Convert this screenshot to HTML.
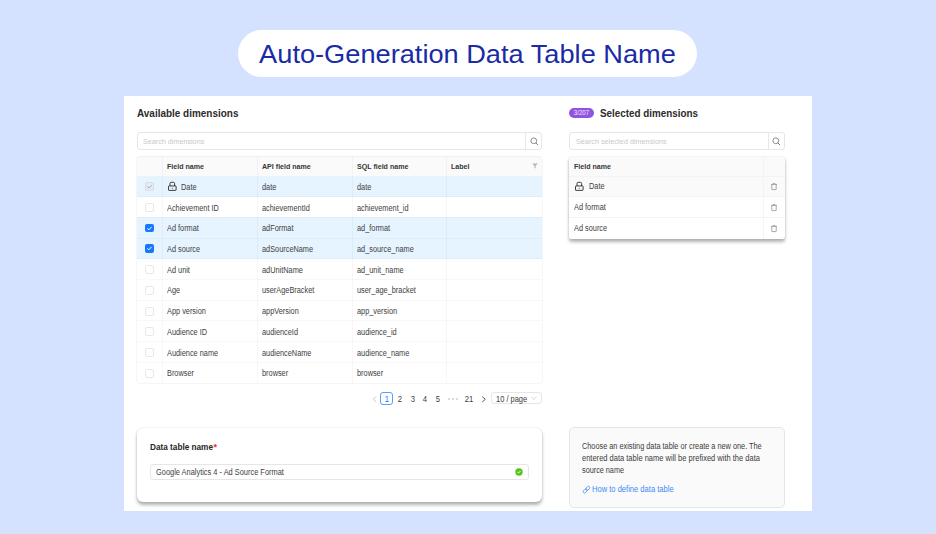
<!DOCTYPE html><html><head><meta charset="utf-8"><style>
*{box-sizing:border-box;margin:0;padding:0}
html,body{width:936px;height:534px;overflow:hidden;background:#D4E2FF;font-family:"Liberation Sans", sans-serif;}
.abs{position:absolute}
.t{position:absolute;white-space:nowrap;transform-origin:0 0}
</style></head><body>
<div class="abs" style="left:238px;top:30px;width:459px;height:47px;border-radius:23.5px;background:#fff"></div>
<div class="t" style="left:237.80px;top:41.10px;width:459px;text-align:center;font-size:26px;line-height:26px;font-weight:normal;color:#1A2BA6;transform:scaleX(1.046);transform-origin:50% 0;">Auto-Generation Data Table Name</div>
<div class="abs" style="left:124px;top:96px;width:688px;height:415px;background:#fff"></div>
<div class="t" style="left:136.70px;top:108.15px;font-size:11px;line-height:11px;font-weight:bold;color:#2b2b2b;transform:scaleX(0.905);">Available dimensions</div>
<div class="abs" style="left:137px;top:132px;width:405px;height:17.8px;border:1px solid #e6e6e6;border-radius:3px"></div>
<div class="abs" style="left:525px;top:132px;width:1px;height:17.8px;background:#e6e6e6"></div>
<svg class="abs" width="9" height="9" viewBox="0 0 9 9" style="left:529.50px;top:136.50px"><circle cx="3.8" cy="3.8" r="2.9" fill="none" stroke="#7a7a7a" stroke-width="0.85"/><path d="M5.9 5.9L8.1 8.1" stroke="#7a7a7a" stroke-width="0.95"/></svg>
<div class="t" style="left:143.00px;top:137.80px;font-size:8px;line-height:8px;font-weight:normal;color:#c9c9c9;transform:scaleX(0.9);">Search dimensions</div>
<div class="abs" style="left:137px;top:156.2px;width:405px;height:19.8px;background:#fafafa;border-radius:3.5px 3.5px 0 0"></div>
<div class="abs" style="left:137px;top:176.00px;width:405px;height:20.7px;background:#E6F4FF"></div>
<div class="abs" style="left:137px;top:196.70px;width:405px;height:20.7px;background:#fff"></div>
<div class="abs" style="left:137px;top:217.40px;width:405px;height:20.7px;background:#E6F4FF"></div>
<div class="abs" style="left:137px;top:238.10px;width:405px;height:20.7px;background:#E6F4FF"></div>
<div class="abs" style="left:137px;top:258.80px;width:405px;height:20.7px;background:#fff"></div>
<div class="abs" style="left:137px;top:279.50px;width:405px;height:20.7px;background:#fff"></div>
<div class="abs" style="left:137px;top:300.20px;width:405px;height:20.7px;background:#fff"></div>
<div class="abs" style="left:137px;top:320.90px;width:405px;height:20.7px;background:#fff"></div>
<div class="abs" style="left:137px;top:341.60px;width:405px;height:20.7px;background:#fff"></div>
<div class="abs" style="left:137px;top:362.30px;width:405px;height:20.7px;background:#fff"></div>
<div class="abs" style="left:137px;top:196.20px;width:405px;height:1px;background:rgba(0,0,0,0.028)"></div>
<div class="abs" style="left:137px;top:216.90px;width:405px;height:1px;background:rgba(0,0,0,0.028)"></div>
<div class="abs" style="left:137px;top:237.60px;width:405px;height:1px;background:rgba(0,0,0,0.028)"></div>
<div class="abs" style="left:137px;top:258.30px;width:405px;height:1px;background:rgba(0,0,0,0.028)"></div>
<div class="abs" style="left:137px;top:279.00px;width:405px;height:1px;background:rgba(0,0,0,0.028)"></div>
<div class="abs" style="left:137px;top:299.70px;width:405px;height:1px;background:rgba(0,0,0,0.028)"></div>
<div class="abs" style="left:137px;top:320.40px;width:405px;height:1px;background:rgba(0,0,0,0.028)"></div>
<div class="abs" style="left:137px;top:341.10px;width:405px;height:1px;background:rgba(0,0,0,0.028)"></div>
<div class="abs" style="left:137px;top:361.80px;width:405px;height:1px;background:rgba(0,0,0,0.028)"></div>
<div class="abs" style="left:162px;top:156.2px;width:1px;height:226.80px;background:rgba(0,0,0,0.032)"></div>
<div class="abs" style="left:257px;top:156.2px;width:1px;height:226.80px;background:rgba(0,0,0,0.032)"></div>
<div class="abs" style="left:352px;top:156.2px;width:1px;height:226.80px;background:rgba(0,0,0,0.032)"></div>
<div class="abs" style="left:446px;top:156.2px;width:1px;height:226.80px;background:rgba(0,0,0,0.032)"></div>
<div class="abs" style="left:136.3px;top:155.70px;width:406.4px;height:228.60px;border:1px solid rgba(0,0,0,0.035);border-radius:3.5px"></div>
<div class="t" style="left:166.90px;top:163.00px;font-size:8px;line-height:8px;font-weight:bold;color:#363636;transform:scaleX(0.885);">Field name</div>
<div class="t" style="left:261.90px;top:163.00px;font-size:8px;line-height:8px;font-weight:bold;color:#363636;transform:scaleX(0.885);">API field name</div>
<div class="t" style="left:356.90px;top:163.00px;font-size:8px;line-height:8px;font-weight:bold;color:#363636;transform:scaleX(0.885);">SQL field name</div>
<div class="t" style="left:451.10px;top:163.00px;font-size:8px;line-height:8px;font-weight:bold;color:#363636;transform:scaleX(0.885);">Label</div>
<svg class="abs" width="6" height="6" viewBox="0 0 6 6" style="left:532px;top:163px"><path d="M0.2 0.6H5.8L3.6 3.0V5.6L2.4 5.0V3.0Z" fill="#b8b8b8"/></svg>
<div class="abs" style="left:145.2px;top:182.25px;width:8.6px;height:8.6px;border-radius:2px;background:#e4ebf2;border:0.7px solid #d6dee7"></div>
<svg class="abs" width="9" height="9" viewBox="0 0 9 9" style="left:145px;top:182.25px"><path d="M2.3 4.4L3.9 6.0L6.8 3.3" fill="none" stroke="#a4acb6" stroke-width="1.0"/></svg>
<svg class="abs" width="11" height="11" viewBox="0 0 11 11" style="left:166.90px;top:181.15px"><path d="M3.0 5.0V2.5a1.2 1.2 0 0 1 1.2 -1.2h2.2a1.2 1.2 0 0 1 1.2 1.2V5.0" fill="none" stroke="#333" stroke-width="0.95"/><rect x="1.5" y="4.95" width="7.6" height="4.4" rx="0.45" fill="none" stroke="#333" stroke-width="0.95"/><rect x="4.75" y="6.75" width="1.1" height="0.8" fill="#444"/></svg>
<div class="t" style="left:181.40px;top:182.93px;font-size:8.5px;line-height:8.5px;font-weight:normal;color:#404040;transform:scaleX(0.865);">Date</div>
<div class="t" style="left:261.90px;top:182.93px;font-size:8.5px;line-height:8.5px;font-weight:normal;color:#404040;transform:scaleX(0.865);">date</div>
<div class="t" style="left:356.90px;top:182.93px;font-size:8.5px;line-height:8.5px;font-weight:normal;color:#404040;transform:scaleX(0.865);">date</div>
<div class="abs" style="left:145.2px;top:203.05px;width:8.8px;height:9px;border-radius:2px;background:#fff;border:0.8px solid #e8e8e8"></div>
<div class="t" style="left:166.90px;top:203.62px;font-size:8.5px;line-height:8.5px;font-weight:normal;color:#404040;transform:scaleX(0.865);">Achievement ID</div>
<div class="t" style="left:261.90px;top:203.62px;font-size:8.5px;line-height:8.5px;font-weight:normal;color:#404040;transform:scaleX(0.865);">achievementId</div>
<div class="t" style="left:356.90px;top:203.62px;font-size:8.5px;line-height:8.5px;font-weight:normal;color:#404040;transform:scaleX(0.865);">achievement_id</div>
<div class="abs" style="left:145.2px;top:223.75px;width:8.9px;height:8.6px;border-radius:2px;background:#1677FF"></div>
<svg class="abs" width="9" height="9" viewBox="0 0 9 9" style="left:145.2px;top:223.75px"><path d="M2.3 4.4L3.9 5.8L6.6 2.9" fill="none" stroke="#fff" stroke-width="1.0"/></svg>
<div class="t" style="left:166.90px;top:224.33px;font-size:8.5px;line-height:8.5px;font-weight:normal;color:#404040;transform:scaleX(0.865);">Ad format</div>
<div class="t" style="left:261.90px;top:224.33px;font-size:8.5px;line-height:8.5px;font-weight:normal;color:#404040;transform:scaleX(0.865);">adFormat</div>
<div class="t" style="left:356.90px;top:224.33px;font-size:8.5px;line-height:8.5px;font-weight:normal;color:#404040;transform:scaleX(0.865);">ad_format</div>
<div class="abs" style="left:145.2px;top:244.45px;width:8.9px;height:8.6px;border-radius:2px;background:#1677FF"></div>
<svg class="abs" width="9" height="9" viewBox="0 0 9 9" style="left:145.2px;top:244.45px"><path d="M2.3 4.4L3.9 5.8L6.6 2.9" fill="none" stroke="#fff" stroke-width="1.0"/></svg>
<div class="t" style="left:166.90px;top:245.03px;font-size:8.5px;line-height:8.5px;font-weight:normal;color:#404040;transform:scaleX(0.865);">Ad source</div>
<div class="t" style="left:261.90px;top:245.03px;font-size:8.5px;line-height:8.5px;font-weight:normal;color:#404040;transform:scaleX(0.865);">adSourceName</div>
<div class="t" style="left:356.90px;top:245.03px;font-size:8.5px;line-height:8.5px;font-weight:normal;color:#404040;transform:scaleX(0.865);">ad_source_name</div>
<div class="abs" style="left:145.2px;top:265.15px;width:8.8px;height:9px;border-radius:2px;background:#fff;border:0.8px solid #e8e8e8"></div>
<div class="t" style="left:166.90px;top:265.73px;font-size:8.5px;line-height:8.5px;font-weight:normal;color:#404040;transform:scaleX(0.865);">Ad unit</div>
<div class="t" style="left:261.90px;top:265.73px;font-size:8.5px;line-height:8.5px;font-weight:normal;color:#404040;transform:scaleX(0.865);">adUnitName</div>
<div class="t" style="left:356.90px;top:265.73px;font-size:8.5px;line-height:8.5px;font-weight:normal;color:#404040;transform:scaleX(0.865);">ad_unit_name</div>
<div class="abs" style="left:145.2px;top:285.85px;width:8.8px;height:9px;border-radius:2px;background:#fff;border:0.8px solid #e8e8e8"></div>
<div class="t" style="left:166.90px;top:286.43px;font-size:8.5px;line-height:8.5px;font-weight:normal;color:#404040;transform:scaleX(0.865);">Age</div>
<div class="t" style="left:261.90px;top:286.43px;font-size:8.5px;line-height:8.5px;font-weight:normal;color:#404040;transform:scaleX(0.865);">userAgeBracket</div>
<div class="t" style="left:356.90px;top:286.43px;font-size:8.5px;line-height:8.5px;font-weight:normal;color:#404040;transform:scaleX(0.865);">user_age_bracket</div>
<div class="abs" style="left:145.2px;top:306.55px;width:8.8px;height:9px;border-radius:2px;background:#fff;border:0.8px solid #e8e8e8"></div>
<div class="t" style="left:166.90px;top:307.12px;font-size:8.5px;line-height:8.5px;font-weight:normal;color:#404040;transform:scaleX(0.865);">App version</div>
<div class="t" style="left:261.90px;top:307.12px;font-size:8.5px;line-height:8.5px;font-weight:normal;color:#404040;transform:scaleX(0.865);">appVersion</div>
<div class="t" style="left:356.90px;top:307.12px;font-size:8.5px;line-height:8.5px;font-weight:normal;color:#404040;transform:scaleX(0.865);">app_version</div>
<div class="abs" style="left:145.2px;top:327.25px;width:8.8px;height:9px;border-radius:2px;background:#fff;border:0.8px solid #e8e8e8"></div>
<div class="t" style="left:166.90px;top:327.82px;font-size:8.5px;line-height:8.5px;font-weight:normal;color:#404040;transform:scaleX(0.865);">Audience ID</div>
<div class="t" style="left:261.90px;top:327.82px;font-size:8.5px;line-height:8.5px;font-weight:normal;color:#404040;transform:scaleX(0.865);">audienceId</div>
<div class="t" style="left:356.90px;top:327.82px;font-size:8.5px;line-height:8.5px;font-weight:normal;color:#404040;transform:scaleX(0.865);">audience_id</div>
<div class="abs" style="left:145.2px;top:347.95px;width:8.8px;height:9px;border-radius:2px;background:#fff;border:0.8px solid #e8e8e8"></div>
<div class="t" style="left:166.90px;top:348.53px;font-size:8.5px;line-height:8.5px;font-weight:normal;color:#404040;transform:scaleX(0.865);">Audience name</div>
<div class="t" style="left:261.90px;top:348.53px;font-size:8.5px;line-height:8.5px;font-weight:normal;color:#404040;transform:scaleX(0.865);">audienceName</div>
<div class="t" style="left:356.90px;top:348.53px;font-size:8.5px;line-height:8.5px;font-weight:normal;color:#404040;transform:scaleX(0.865);">audience_name</div>
<div class="abs" style="left:145.2px;top:368.65px;width:8.8px;height:9px;border-radius:2px;background:#fff;border:0.8px solid #e8e8e8"></div>
<div class="t" style="left:166.90px;top:369.22px;font-size:8.5px;line-height:8.5px;font-weight:normal;color:#404040;transform:scaleX(0.865);">Browser</div>
<div class="t" style="left:261.90px;top:369.22px;font-size:8.5px;line-height:8.5px;font-weight:normal;color:#404040;transform:scaleX(0.865);">browser</div>
<div class="t" style="left:356.90px;top:369.22px;font-size:8.5px;line-height:8.5px;font-weight:normal;color:#404040;transform:scaleX(0.865);">browser</div>
<svg class="abs" width="6" height="7" viewBox="0 0 6 7" style="left:371.5px;top:395.6px"><path d="M4.3 0.6L1.2 3.3L4.3 6.0" fill="none" stroke="#c8c8c8" stroke-width="0.9"/></svg>
<div class="abs" style="left:380.2px;top:392px;width:13px;height:12.5px;border:1px solid #5a9cff;border-radius:3px"></div>
<div class="t" style="left:380.90px;top:394.97px;width:12px;text-align:center;font-size:8.5px;line-height:8.5px;font-weight:normal;color:#1677ff;transform:scaleX(0.9);transform-origin:50% 0;">1</div>
<div class="t" style="left:393.00px;top:394.97px;width:14px;text-align:center;font-size:8.5px;line-height:8.5px;font-weight:normal;color:#404040;transform:scaleX(0.9);transform-origin:50% 0;">2</div>
<div class="t" style="left:405.70px;top:394.97px;width:14px;text-align:center;font-size:8.5px;line-height:8.5px;font-weight:normal;color:#404040;transform:scaleX(0.9);transform-origin:50% 0;">3</div>
<div class="t" style="left:418.40px;top:394.97px;width:14px;text-align:center;font-size:8.5px;line-height:8.5px;font-weight:normal;color:#404040;transform:scaleX(0.9);transform-origin:50% 0;">4</div>
<div class="t" style="left:431.30px;top:394.97px;width:14px;text-align:center;font-size:8.5px;line-height:8.5px;font-weight:normal;color:#404040;transform:scaleX(0.9);transform-origin:50% 0;">5</div>
<div class="t" style="left:462.40px;top:394.97px;width:14px;text-align:center;font-size:8.5px;line-height:8.5px;font-weight:normal;color:#404040;transform:scaleX(0.9);transform-origin:50% 0;">21</div>
<div class="abs" style="left:448.20px;top:398px;width:2px;height:2px;border-radius:1px;background:#cfcfcf"></div>
<div class="abs" style="left:452.30px;top:398px;width:2px;height:2px;border-radius:1px;background:#cfcfcf"></div>
<div class="abs" style="left:456.40px;top:398px;width:2px;height:2px;border-radius:1px;background:#cfcfcf"></div>
<svg class="abs" width="6" height="7" viewBox="0 0 6 7" style="left:481px;top:395.5px"><path d="M1.2 0.6L4.3 3.3L1.2 6.0" fill="none" stroke="#555" stroke-width="0.95"/></svg>
<div class="abs" style="left:491px;top:391.8px;width:50.8px;height:12.6px;border:1px solid #e6e6e6;border-radius:3px"></div>
<div class="t" style="left:495.80px;top:394.77px;font-size:8.5px;line-height:8.5px;font-weight:normal;color:#404040;transform:scaleX(0.88);">10 / page</div>
<svg class="abs" width="6" height="5" viewBox="0 0 6 5" style="left:530.8px;top:396.0px"><path d="M0.5 0.9L3 3.5L5.5 0.9" fill="none" stroke="#c8c8c8" stroke-width="0.75"/></svg>
<div class="abs" style="left:137px;top:427.6px;width:405px;height:74px;border-radius:6px;background:#fff;box-shadow:0 2.5px 3.5px rgba(0,0,0,0.3),0 0 1.5px rgba(0,0,0,0.12)"></div>
<div class="t" style="left:150.10px;top:442.57px;font-size:8.5px;line-height:8.5px;font-weight:bold;color:#262626;transform:scaleX(0.966);">Data table name</div>
<div class="abs" style="left:213.6px;top:443px;font-size:9px;line-height:9px;color:#f5222d;font-weight:bold">*</div>
<div class="abs" style="left:150.4px;top:463.9px;width:378.3px;height:16.5px;border:0.8px solid #e6e6e6;border-radius:3px"></div>
<div class="t" style="left:156.00px;top:468.47px;font-size:8.5px;line-height:8.5px;font-weight:normal;color:#404040;transform:scaleX(0.873);">Google Analytics 4 - Ad Source Format</div>
<svg class="abs" width="8" height="8" viewBox="0 0 8 8" style="left:514.6px;top:468.2px"><circle cx="4" cy="4" r="3.7" fill="#52c41a"/><path d="M2.3 4.1L3.5 5.1L5.6 2.9" fill="none" stroke="#fff" stroke-width="0.9"/></svg>
<div class="abs" style="left:569px;top:107.5px;width:25px;height:10.5px;border-radius:5.25px;background:#9254DE"></div>
<div class="t" style="left:569.00px;top:109.20px;width:25px;text-align:center;font-size:8px;line-height:8px;font-weight:normal;color:#efe6ff;transform:scaleX(0.77);transform-origin:50% 0;">3/207</div>
<div class="t" style="left:599.60px;top:108.35px;font-size:11px;line-height:11px;font-weight:bold;color:#2b2b2b;transform:scaleX(0.895);">Selected dimensions</div>
<div class="abs" style="left:569px;top:132px;width:216px;height:17.8px;border:1px solid #e6e6e6;border-radius:3px"></div>
<div class="abs" style="left:768px;top:132px;width:1px;height:17.8px;background:#e6e6e6"></div>
<svg class="abs" width="9" height="9" viewBox="0 0 9 9" style="left:772.20px;top:136.50px"><circle cx="3.8" cy="3.8" r="2.9" fill="none" stroke="#7a7a7a" stroke-width="0.85"/><path d="M5.9 5.9L8.1 8.1" stroke="#7a7a7a" stroke-width="0.95"/></svg>
<div class="t" style="left:575.50px;top:137.80px;font-size:8px;line-height:8px;font-weight:normal;color:#c9c9c9;transform:scaleX(0.905);">Search selected dimensions</div>
<div class="abs" style="left:569.3px;top:156.5px;width:215.7px;height:82.5px;border-radius:3px;background:#fff;box-shadow:0 2.5px 3.5px rgba(0,0,0,0.3),0 0 1.5px rgba(0,0,0,0.12)"></div>
<div class="abs" style="left:569.3px;top:156.5px;width:215.7px;height:19.7px;background:#fafafa;border-radius:4px 4px 0 0"></div>
<div class="t" style="left:574.20px;top:163.40px;font-size:8px;line-height:8px;font-weight:bold;color:#363636;transform:scaleX(0.885);">Field name</div>
<div class="abs" style="left:569.3px;top:176.2px;width:215.7px;height:20.70px;background:#fafafa;"></div>
<div class="abs" style="left:569.3px;top:175.7px;width:215.7px;height:1px;background:#f3f3f3"></div>
<svg class="abs" width="11" height="11" viewBox="0 0 11 11" style="left:573.80px;top:181.35px"><path d="M3.0 5.0V2.5a1.2 1.2 0 0 1 1.2 -1.2h2.2a1.2 1.2 0 0 1 1.2 1.2V5.0" fill="none" stroke="#333" stroke-width="0.95"/><rect x="1.5" y="4.95" width="7.6" height="4.4" rx="0.45" fill="none" stroke="#333" stroke-width="0.95"/><rect x="4.75" y="6.75" width="1.1" height="0.8" fill="#444"/></svg>
<div class="t" style="left:588.50px;top:182.38px;font-size:8.5px;line-height:8.5px;font-weight:normal;color:#404040;transform:scaleX(0.865);">Date</div>
<svg class="abs" width="8" height="9" viewBox="0 0 8 9" style="left:770.30px;top:182.15px"><path d="M1.1 2.4H7.0M3.2 2.3V1.45H4.9V2.3M1.8 2.5V7.3a0.3 0.3 0 0 0 0.3 0.3H5.9a0.3 0.3 0 0 0 0.3 -0.3V2.5" fill="none" stroke="#8c8c8c" stroke-width="0.75"/></svg>
<div class="abs" style="left:569.3px;top:196.9px;width:215.7px;height:20.50px;background:#fff;"></div>
<div class="abs" style="left:569.3px;top:196.4px;width:215.7px;height:1px;background:#f3f3f3"></div>
<div class="t" style="left:574.20px;top:203.18px;font-size:8.5px;line-height:8.5px;font-weight:normal;color:#404040;transform:scaleX(0.865);">Ad format</div>
<svg class="abs" width="8" height="9" viewBox="0 0 8 9" style="left:770.30px;top:202.75px"><path d="M1.1 2.4H7.0M3.2 2.3V1.45H4.9V2.3M1.8 2.5V7.3a0.3 0.3 0 0 0 0.3 0.3H5.9a0.3 0.3 0 0 0 0.3 -0.3V2.5" fill="none" stroke="#8c8c8c" stroke-width="0.75"/></svg>
<div class="abs" style="left:569.3px;top:217.4px;width:215.7px;height:21.60px;background:#fff;border-radius:0 0 3px 3px;"></div>
<div class="abs" style="left:569.3px;top:216.9px;width:215.7px;height:1px;background:#f3f3f3"></div>
<div class="t" style="left:574.20px;top:223.78px;font-size:8.5px;line-height:8.5px;font-weight:normal;color:#404040;transform:scaleX(0.865);">Ad source</div>
<svg class="abs" width="8" height="9" viewBox="0 0 8 9" style="left:770.30px;top:223.80px"><path d="M1.1 2.4H7.0M3.2 2.3V1.45H4.9V2.3M1.8 2.5V7.3a0.3 0.3 0 0 0 0.3 0.3H5.9a0.3 0.3 0 0 0 0.3 -0.3V2.5" fill="none" stroke="#8c8c8c" stroke-width="0.75"/></svg>
<div class="abs" style="left:763px;top:156.5px;width:1px;height:82.5px;background:#f4f4f4"></div>
<div class="abs" style="left:569px;top:427.4px;width:216px;height:80.2px;border:0.8px solid #e6e6e6;border-radius:5px;background:#fafafa"></div>
<div class="t" style="left:582.30px;top:442.38px;font-size:8.5px;line-height:8.5px;font-weight:normal;color:#3a3a3a;transform:scaleX(0.861);">Choose an existing data table or create a new one. The</div>
<div class="t" style="left:582.30px;top:454.12px;font-size:8.5px;line-height:8.5px;font-weight:normal;color:#3a3a3a;transform:scaleX(0.884);">entered data table name will be prefixed with the data</div>
<div class="t" style="left:582.30px;top:465.88px;font-size:8.5px;line-height:8.5px;font-weight:normal;color:#3a3a3a;transform:scaleX(0.855);">source name</div>
<svg class="abs" width="9" height="9" viewBox="0 0 9 9" style="left:582.2px;top:485.2px"><g fill="none" stroke="#559af8" stroke-width="0.9"><rect x="0.9" y="4.6" width="4.6" height="2.7" rx="1.35" transform="rotate(-45 3.2 5.95)"/><rect x="3.5" y="2.0" width="4.6" height="2.7" rx="1.35" transform="rotate(-45 5.8 3.35)"/></g></svg>
<div class="t" style="left:592.00px;top:484.57px;font-size:8.5px;line-height:8.5px;font-weight:normal;color:#3d8bf5;transform:scaleX(0.89);">How to define data table</div>
</body></html>
